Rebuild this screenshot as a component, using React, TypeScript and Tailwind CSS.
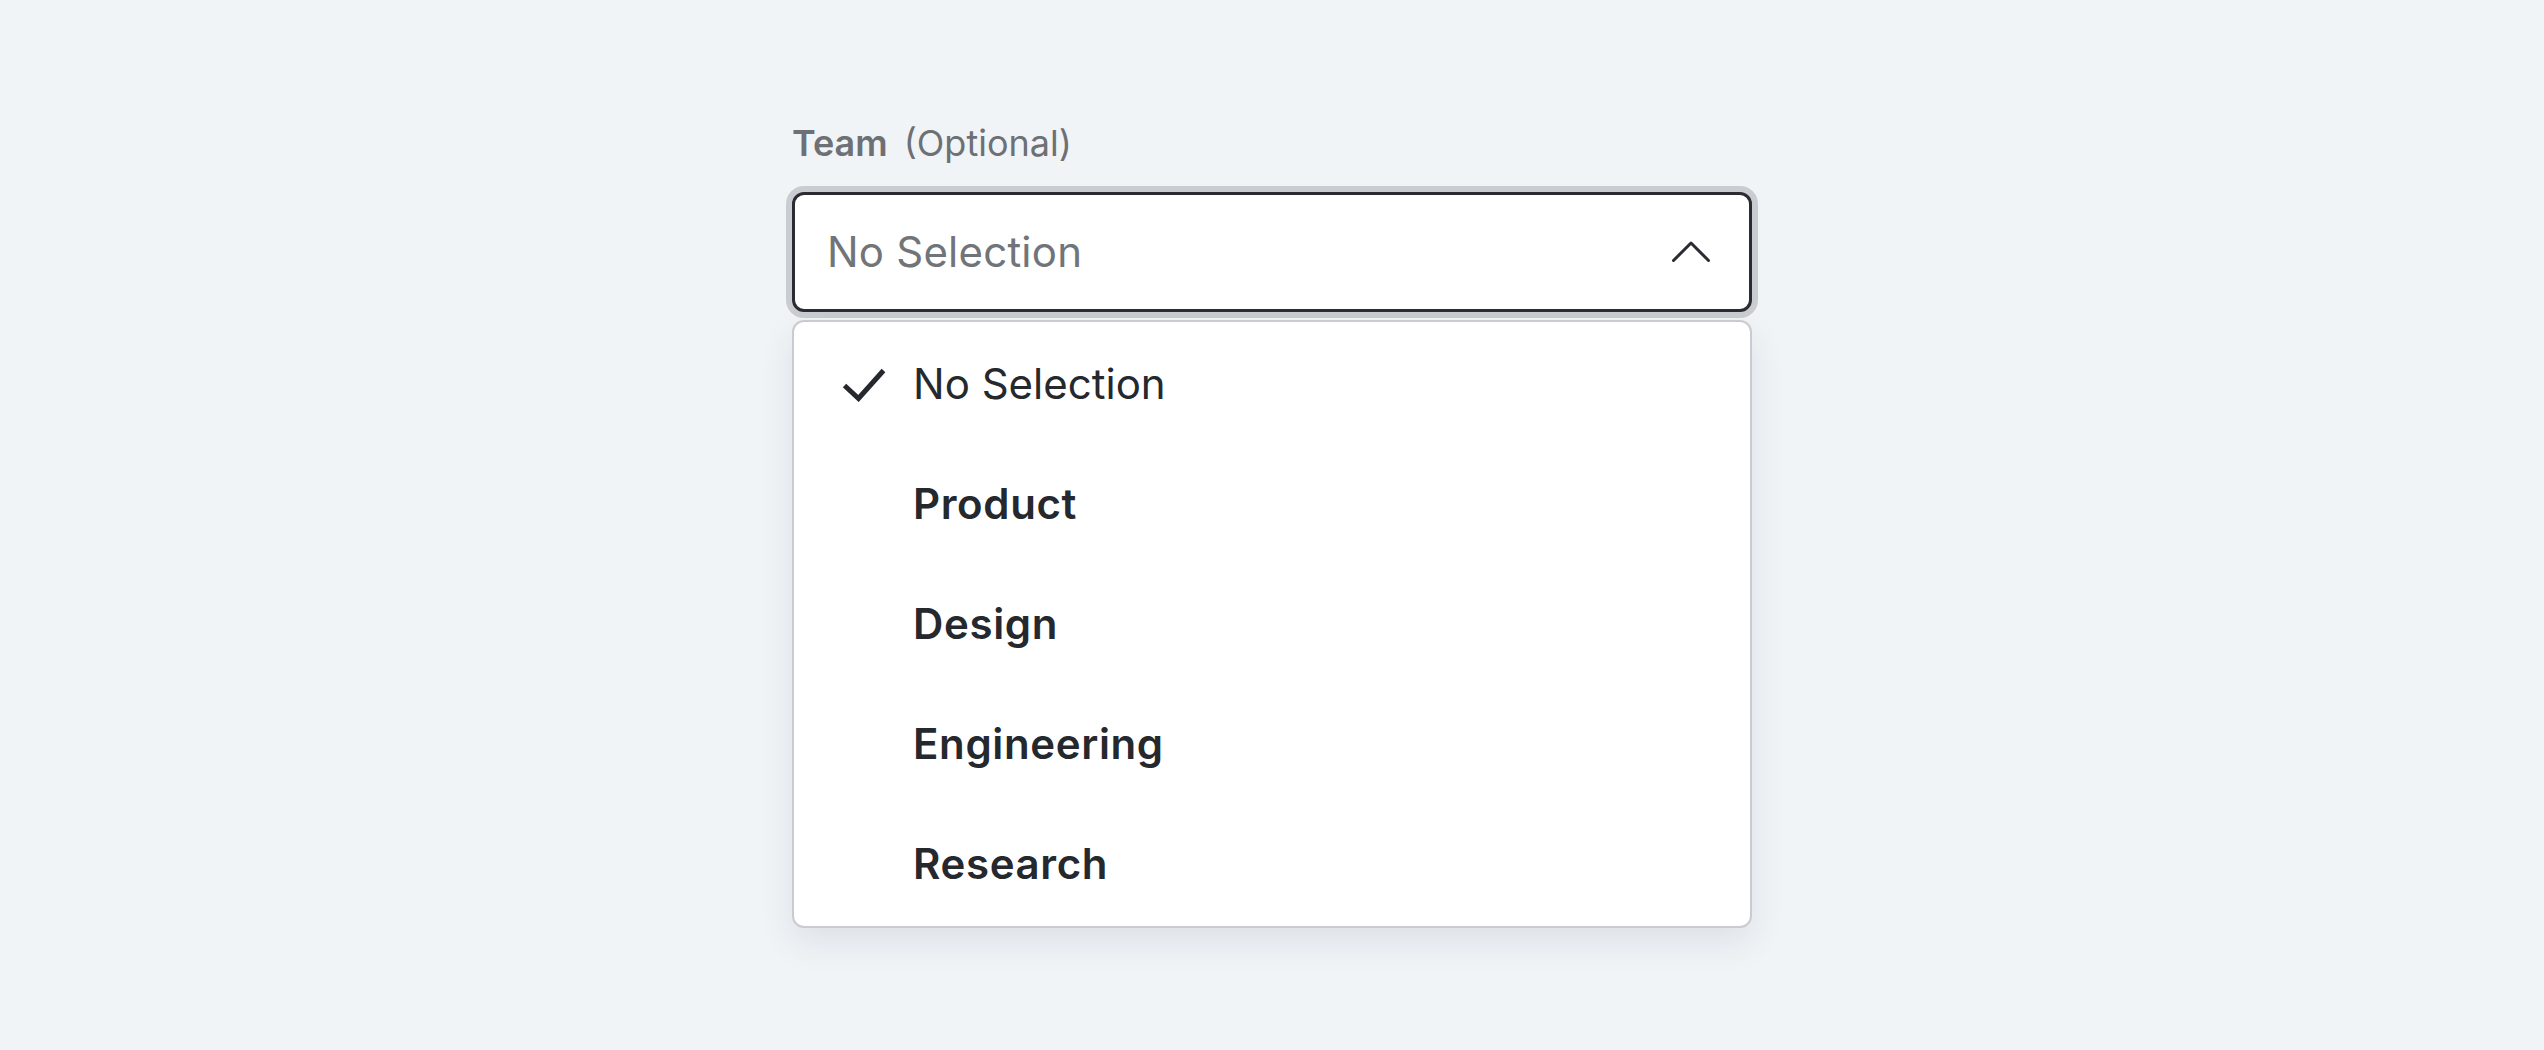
import React from "react";

const items = [
  { label: "No Selection", selected: true },
  { label: "Product", selected: false },
  { label: "Design", selected: false },
  { label: "Engineering", selected: false },
  { label: "Research", selected: false },
];

export default function App() {
  return (
    <div
      className="min-h-[1050px] w-full bg-[#f1f4f7] pt-[123px]"
      style={{ fontFamily: "Inter, 'Noto Sans', sans-serif" }}
    >
      <div className="mx-auto w-[960px]">
        <div className="flex items-baseline gap-[16px] text-[36px] leading-[40px] text-[#6d7075]">
          <span className="font-semibold">Team</span>
          <span className="font-normal">(Optional)</span>
        </div>
        <div className="mt-[29px] flex h-[120px] items-center justify-between rounded-[12px] border-[3px] border-[#2a2c31] bg-white pl-[32px] pr-[38px] shadow-[0_0_0_6px_#c9cdd2]">
          <span className="text-[42px] leading-[50px] tracking-[0.005em] text-[#717479]">No Selection</span>
          <svg width="40" height="24" viewBox="0 0 40 24" fill="none">
            <polyline
              points="2.5,20.5 20,3 37.5,20.5"
              stroke="#2a2c31"
              strokeWidth="3"
              strokeLinecap="round"
              strokeLinejoin="round"
            />
          </svg>
        </div>
        <div className="mt-[8px] rounded-[12px] border-2 border-[#c8cbd0] bg-white py-[2px] shadow-[0_14px_36px_rgba(20,25,40,0.09)]">
          {items.map((it) => (
            <div key={it.label} className="flex h-[120px] items-center pl-[48px]">
              <div className="flex w-[71px] items-center">
                {it.selected && (
                  <svg width="44" height="36" viewBox="0 0 44 36" fill="none">
                    <polyline
                      points="2.5,19.5 16.5,32.5 41.5,4.5"
                      stroke="#25282d"
                      strokeWidth="5"
                      strokeLinecap="butt"
                      strokeLinejoin="miter"
                    />
                  </svg>
                )}
              </div>
              <span
                className={
                  it.selected
                    ? "text-[42px] leading-[50px] font-normal text-[#25282d]"
                    : "text-[42px] leading-[50px] font-semibold tracking-[0.015em] text-[#25282d]"
                }
              >
                {it.label}
              </span>
            </div>
          ))}
        </div>
      </div>
    </div>
  );
}
